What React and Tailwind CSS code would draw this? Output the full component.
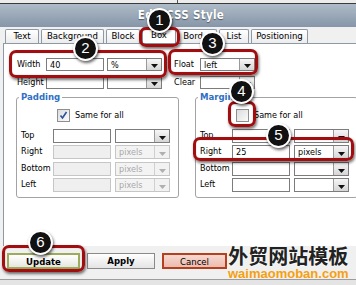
import React from 'react';

const font = { fontFamily: '"DejaVu Sans Condensed", "DejaVu Sans", sans-serif' };

function DropButton({ disabled }) {
  return (
    <span
      className={`flex h-full w-[15px] shrink-0 items-end justify-center border-l pb-[2px] ${
        disabled ? 'border-[#d0d0d0] bg-[#f2f2f2]' : 'border-[#9a9a9a] bg-gradient-to-b from-[#f6f6f6] to-[#d6d6d6]'
      }`}
    >
      <svg width="7" height="4" viewBox="0 0 7 4">
        <path d="M0 0h7L3.5 4z" fill={disabled ? '#b0b0b0' : '#111'} />
      </svg>
    </span>
  );
}

function Select({ value, disabled, w = 'w-[55px]' }) {
  return (
    <div
      className={`flex h-full ${w} border ${
        disabled ? 'border-[#c6c6c6] bg-[#f3f3f3]' : 'border-[#7c7c7c] bg-white'
      }`}
    >
      <span className={`flex-1 truncate pl-[3px] leading-[12px] ${disabled ? 'text-[#a8a8a8]' : 'text-black'}`}>
        {value}
      </span>
      <DropButton disabled={disabled} />
    </div>
  );
}

function Input({ value, disabled, w = 'w-[58px]' }) {
  return (
    <div
      className={`h-full ${w} border pl-[3px] leading-[12px] ${
        disabled ? 'border-[#c6c6c6] bg-[#efefef]' : 'border-[#7c7c7c] bg-white'
      }`}
    >
      {value}
    </div>
  );
}

function Checkbox({ checked }) {
  return (
    <span className="flex h-[13px] w-[13px] items-center justify-center border border-[#8e8f8f] bg-gradient-to-br from-[#dcdcdc] to-[#fbfbfb]">
      {checked && (
        <svg width="9" height="9" viewBox="0 0 9 9">
          <path d="M1.5 4.5l2 2.5L7.5 1" fill="none" stroke="#2b4f9c" strokeWidth="1.6" />
        </svg>
      )}
    </span>
  );
}

function BoxSide({ title, checked, rows }) {
  return (
    <fieldset className="h-[107px] w-[163px] shrink-0 rounded-[3px] border border-[#a3a3a3] px-0">
      <legend className="ml-[2px] px-[2px] text-[9.5px] font-bold leading-[12px] text-[#2f6fc4]">{title}</legend>
      <div className="mt-[6px] flex items-center gap-[5px] pl-[40px]">
        <Checkbox checked={checked} />
        <span>Same for all</span>
      </div>
      <div className="mt-[6px] flex flex-col gap-[2.5px]">
        {rows.map((r) => (
          <div key={r.label} className="flex h-[14px] items-center">
            <span className="w-[36px] pl-[4px]">{r.label}</span>
            <Input value={r.value} disabled={r.disabled} w="w-[58px]" />
            <span className="w-[4px]" />
            <Select value={r.unit} disabled={r.disabled} w="w-[55px]" />
          </div>
        ))}
      </div>
    </fieldset>
  );
}

function Marker({ n, className }) {
  return (
    <div
      className={`absolute flex h-[25px] w-[25px] items-center justify-center rounded-full border-2 border-white bg-[#111] text-[15px] text-white shadow-[1px_2px_3px_rgba(0,0,0,0.6)] ${className}`}
      style={{ fontFamily: '"Liberation Sans", Arial, sans-serif' }}
    >
      {n}
    </div>
  );
}

function Ring({ className }) {
  return (
    <div
      className={`absolute rounded-[7px] border-[3px] border-[#a20e10] shadow-[1px_2px_3px_rgba(0,0,0,0.55),inset_0_0_1px_rgba(0,0,0,0.4)] ${className}`}
    />
  );
}

const tabs = [
  ['Text', 'w-[34px]'],
  ['Background', 'w-[63px]'],
  ['Block', 'w-[34px]'],
  ['Box', 'w-[34px]'],
  ['Border', 'w-[39px]'],
  ['List', 'w-[30px]'],
  ['Positioning', 'w-[57px]'],
];

export default function App() {
  return (
    <div className="relative h-[285px] w-[356px] overflow-hidden bg-[#f0f0f0] text-[9px] text-black" style={font}>
      <div className="flex h-[3px] bg-[#ececec]">
        <span className="ml-[177px] w-px bg-[#555]" />
      </div>
      <div className="h-px bg-[#3a3a3a]" />
      <div className="flex h-[23px] items-center justify-center bg-gradient-to-b from-[#aebbc8] to-[#8696a8] pl-[6px] text-[11.5px] font-bold tracking-[0.3px] text-white [text-shadow:0_1px_1px_rgba(0,0,0,0.45)]">
        Edit CSS Style
      </div>

      {/* Tabs */}
      <div className="flex h-[16px] items-end gap-[2px] pl-[5px]">
        {tabs.map(([name, w]) => (
          <div
            key={name}
            className={`flex items-center justify-center rounded-t-[2px] border border-b-0 border-[#8d9aa6] bg-gradient-to-b from-white to-[#ececec] text-[9.5px] ${w} ${
              name === 'Box' ? 'h-[16px] from-white to-white' : 'h-[14px]'
            }`}
          >
            {name}
          </div>
        ))}
      </div>

      {/* Panel */}
      <div className="ml-[3px] h-[203px] border-l border-t border-[#8d9aa6] bg-white pl-[1px]">
        <div className="mt-[14px] flex h-[13px] items-center">
          <span className="w-[41px] pl-[12px]">Width</span>
          <Input value="40" w="w-[58px]" />
          <span className="w-[3px]" />
          <Select value="%" w="w-[55px]" />
          <span className="w-[38px] pl-[12px]">Float</span>
          <Select value="left" w="w-[55px]" />
        </div>
        <div className="mt-[5px] flex h-[13px] items-center">
          <span className="w-[41px] pl-[12px]">Height</span>
          <Input value="" w="w-[58px]" />
          <span className="w-[3px]" />
          <Select value="" w="w-[55px]" />
          <span className="w-[38px] pl-[12px]">Clear</span>
          <Select value="" w="w-[55px]" />
        </div>
        <div className="mt-[2px] flex gap-[16px] pl-[11px]">
          <BoxSide
            title="Padding"
            checked
            rows={[
              { label: 'Top', value: '', unit: '' },
              { label: 'Right', value: '', unit: 'pixels', disabled: true },
              { label: 'Bottom', value: '', unit: 'pixels', disabled: true },
              { label: 'Left', value: '', unit: 'pixels', disabled: true },
            ]}
          />
          <BoxSide
            title="Margin"
            rows={[
              { label: 'Top', value: '', unit: '' },
              { label: 'Right', value: '25', unit: 'pixels' },
              { label: 'Bottom', value: '', unit: '' },
              { label: 'Left', value: '', unit: '' },
            ]}
          />
        </div>
      </div>

      {/* Buttons */}
      <div className="flex h-[33px] gap-[7px] pl-[7px] pt-[7px]">
        <button className="h-[16px] w-[73px] border-2 border-[#9cab5c] bg-gradient-to-b from-white to-[#e6e6e0] text-[9.5px] font-bold">
          Update
        </button>
        <button className="h-[16px] w-[68px] border border-[#8a8a8a] bg-gradient-to-b from-white to-[#e4e4e4] text-[9.5px] font-bold">
          Apply
        </button>
        <button className="h-[16px] w-[65px] border-2 border-[#b4401f] bg-gradient-to-b from-[#f6d8d0] to-[#edbcae] text-[9.5px]">
          Cancel
        </button>
      </div>
      <div className="h-px bg-[#9c9c9c]" />
      <div className="h-[5px] bg-[#e4e4e4]" />

      {/* Annotations */}
      <Ring className="left-[139px] top-[27px] h-[20px] w-[41px]" />
      <Ring className="left-[9px] top-[50px] h-[28px] w-[158px]" />
      <Ring className="left-[168px] top-[49px] h-[26px] w-[90px]" />
      <Ring className="left-[228px] top-[101px] h-[26px] w-[28px]" />
      <Ring className="left-[193px] top-[137px] h-[24px] w-[161px]" />
      <Ring className="left-[2px] top-[245px] h-[27px] w-[83px]" />

      <Marker n="1" className="left-[147px] top-[8px]" />
      <Marker n="2" className="left-[73px] top-[36px]" />
      <Marker n="3" className="left-[200px] top-[31px]" />
      <Marker n="4" className="left-[229px] top-[79px]" />
      <Marker n="5" className="left-[266px] top-[123px]" />
      <Marker n="6" className="left-[28px] top-[230px]" />

      {/* Watermark */}
      <div className="absolute left-[228px] top-[246px] flex flex-col items-center leading-none">
        <span
          className="text-[20px] font-bold text-[#222] [text-shadow:0_0_2px_#fff,0_0_2px_#fff]"
          style={{ fontFamily: '"Noto Sans CJK SC", sans-serif' }}
        >
          外贸网站模板
        </span>
        <span
          className="mt-[1px] text-[13px] font-bold text-[#f5a00f]"
          style={{ fontFamily: '"Liberation Sans", Arial, sans-serif' }}
        >
          waimaomoban.com
        </span>
      </div>
    </div>
  );
}
